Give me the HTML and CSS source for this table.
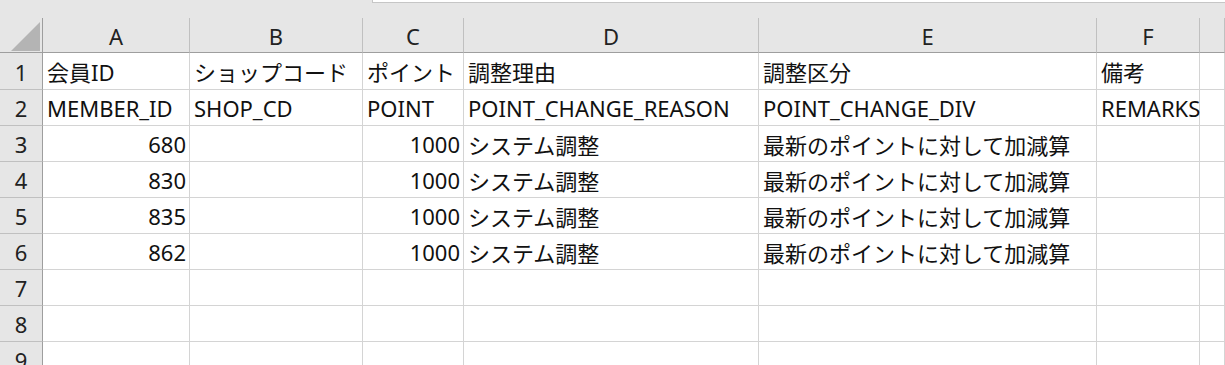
FILE: index.html
```html
<!DOCTYPE html>
<html lang="ja">

<head>
    <meta charset="UTF-8">
    <meta name="viewport" content="width=device-width, initial-scale=1.0">
    <title>ポイント調整</title>
    <link rel="stylesheet" href="styles.css">
</head>

<body>
    <div class="bar">
        <div class="bar-box"></div>
    </div>
    <div class="sheet">
        <!-- 列見出し -->
        <div class="corner"><span class="corner-mark"></span></div>
        <div class="col-head">A</div>
        <div class="col-head">B</div>
        <div class="col-head">C</div>
        <div class="col-head">D</div>
        <div class="col-head">E</div>
        <div class="col-head">F</div>
        <div class="col-head"></div>

        <div class="row-head">1</div>
        <div class="cell">会員ID</div>
        <div class="cell">ショップコード</div>
        <div class="cell">ポイント</div>
        <div class="cell">調整理由</div>
        <div class="cell">調整区分</div>
        <div class="cell">備考</div>
        <div class="cell"></div>

        <div class="row-head">2</div>
        <div class="cell">MEMBER_ID</div>
        <div class="cell">SHOP_CD</div>
        <div class="cell">POINT</div>
        <div class="cell">POINT_CHANGE_REASON</div>
        <div class="cell">POINT_CHANGE_DIV</div>
        <div class="cell">REMARKS</div>
        <div class="cell"></div>

        <div class="row-head">3</div>
        <div class="cell num">680</div>
        <div class="cell"></div>
        <div class="cell num">1000</div>
        <div class="cell">システム調整</div>
        <div class="cell">最新のポイントに対して加減算</div>
        <div class="cell"></div>
        <div class="cell"></div>

        <div class="row-head">4</div>
        <div class="cell num">830</div>
        <div class="cell"></div>
        <div class="cell num">1000</div>
        <div class="cell">システム調整</div>
        <div class="cell">最新のポイントに対して加減算</div>
        <div class="cell"></div>
        <div class="cell"></div>

        <div class="row-head">5</div>
        <div class="cell num">835</div>
        <div class="cell"></div>
        <div class="cell num">1000</div>
        <div class="cell">システム調整</div>
        <div class="cell">最新のポイントに対して加減算</div>
        <div class="cell"></div>
        <div class="cell"></div>

        <div class="row-head">6</div>
        <div class="cell num">862</div>
        <div class="cell"></div>
        <div class="cell num">1000</div>
        <div class="cell">システム調整</div>
        <div class="cell">最新のポイントに対して加減算</div>
        <div class="cell"></div>
        <div class="cell"></div>

        <div class="row-head">7</div>
        <div class="cell"></div>
        <div class="cell"></div>
        <div class="cell"></div>
        <div class="cell"></div>
        <div class="cell"></div>
        <div class="cell"></div>
        <div class="cell"></div>

        <div class="row-head">8</div>
        <div class="cell"></div>
        <div class="cell"></div>
        <div class="cell"></div>
        <div class="cell"></div>
        <div class="cell"></div>
        <div class="cell"></div>
        <div class="cell"></div>

        <div class="row-head">9</div>
        <div class="cell"></div>
        <div class="cell"></div>
        <div class="cell"></div>
        <div class="cell"></div>
        <div class="cell"></div>
        <div class="cell"></div>
        <div class="cell"></div>
    </div>
</body>

</html>
```

FILE: styles.css
```css
* {
    box-sizing: border-box;
}

html,
body {
    margin: 0;
    height: 100%;
    overflow: hidden;
    background-color: #fff;
}

body {
    font-family: "Noto Sans", "Noto Sans CJK JP", sans-serif;
    font-size: 22px;
    color: #111;
}

/* 数式バーの下端 */
.bar {
    height: 18px;
    background-color: #e6e6e6;
    padding-left: 372px;
}

.bar-box {
    height: 3px;
    background-color: #fff;
    border-left: 1px solid #c6c6c6;
    border-bottom: 1px solid #c6c6c6;
}

.sheet {
    display: grid;
    grid-template-columns: 43px 147px 173px 101px 295px 338px 103px 1fr;
    grid-template-rows: 35px 37px repeat(8, 36px);
}

.corner,
.col-head,
.row-head {
    background-color: #e6e6e6;
    display: flex;
    align-items: center;
    justify-content: center;
    color: #222;
}

.corner {
    border-right: 1px solid #9e9e9e;
    border-bottom: 1px solid #9e9e9e;
    align-items: flex-end;
    justify-content: flex-end;
    padding: 0 2px 1px 0;
}

.corner-mark {
    width: 29px;
    height: 29px;
    background-color: #b4b4b4;
    clip-path: polygon(100% 0, 100% 100%, 0 100%);
}

.col-head {
    border-right: 1px solid #c0c0c0;
    border-bottom: 1px solid #9e9e9e;
    padding-top: 1px;
}

.row-head {
    border-right: 1px solid #9e9e9e;
    border-bottom: 1px solid #c0c0c0;
    padding-top: 1px;
}

.cell {
    display: flex;
    align-items: center;
    padding: 0 4px 0 4px;
    border-right: 1px solid #d4d4d4;
    border-bottom: 1px solid #d4d4d4;
    white-space: nowrap;
    overflow: visible;
}

.cell.num {
    justify-content: flex-end;
    padding-right: 3px;
}
```
